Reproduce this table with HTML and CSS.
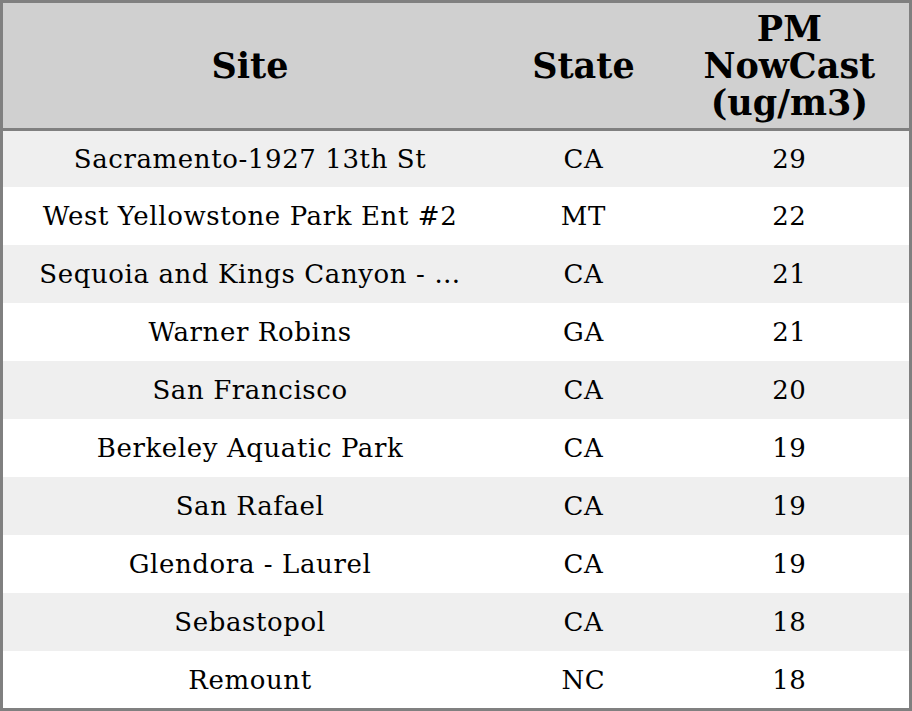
FILE: index.html
```html
<!DOCTYPE html>
<html>
<head>
<meta charset="utf-8">
<link rel="stylesheet" href="styles.css">
</head>
<body>
<table class="aq">
  <colgroup>
    <col class="c-site"><col class="c-state"><col class="c-pm">
  </colgroup>
  <thead>
    <tr><th>Site</th><th>State</th><th>PM<br>NowCast<br>(ug/m3)</th></tr>
  </thead>
  <tbody>
    <tr><td>Sacramento-1927 13th St</td><td>CA</td><td>29</td></tr>
    <tr><td>West Yellowstone Park Ent #2</td><td>MT</td><td>22</td></tr>
    <tr><td>Sequoia and Kings Canyon - …</td><td>CA</td><td>21</td></tr>
    <tr><td>Warner Robins</td><td>GA</td><td>21</td></tr>
    <tr><td>San Francisco</td><td>CA</td><td>20</td></tr>
    <tr><td>Berkeley Aquatic Park</td><td>CA</td><td>19</td></tr>
    <tr><td>San Rafael</td><td>CA</td><td>19</td></tr>
    <tr><td>Glendora - Laurel</td><td>CA</td><td>19</td></tr>
    <tr><td>Sebastopol</td><td>CA</td><td>18</td></tr>
    <tr><td>Remount</td><td>NC</td><td>18</td></tr>
  </tbody>
</table>
</body>
</html>
```
FILE: styles.css
```css
html, body { margin: 0; padding: 0; background: #ffffff; }
.aq {
  width: 912px;
  border-collapse: collapse;
  table-layout: fixed;
  border: 3px solid #808080;
  font-family: "DejaVu Serif", serif;
  color: #000;
}
.c-site { width: 494px; }
.c-state { width: 172px; }
.c-pm { width: 240px; }
.aq thead tr { background: #d0d0d0; border-bottom: 3px solid #808080; }
.aq th {
  height: 125px;
  padding: 0;
  font-size: 35px;
  line-height: 37px;
  font-weight: bold;
  text-align: center;
  vertical-align: middle;
}
.aq tbody tr { height: 58px; }
.aq tbody tr:first-child { height: 57px; }
.aq tbody tr:last-child { height: 59px; }
.aq td {
  padding: 1px 0 0 0;
  font-size: 26px;
  line-height: 30px;
  letter-spacing: 0.6px;
  text-align: center;
  vertical-align: middle;
  white-space: nowrap;
  overflow: hidden;
}
.aq tbody tr:nth-child(odd) { background: #efefef; }
.aq tbody tr:nth-child(even) { background: #ffffff; }
```
